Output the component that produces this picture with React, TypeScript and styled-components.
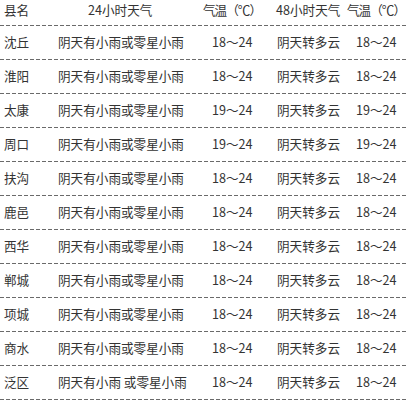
import styled, { createGlobalStyle } from "styled-components";

interface Row {
  name: string;
  day1: string;
  temp1: string;
  day2: string;
  temp2: string;
}

const rows: Row[] = [
  { name: "沈丘", day1: "阴天有小雨或零星小雨", temp1: "18～24", day2: "阴天转多云", temp2: "18～24" },
  { name: "淮阳", day1: "阴天有小雨或零星小雨", temp1: "18～24", day2: "阴天转多云", temp2: "18～24" },
  { name: "太康", day1: "阴天有小雨或零星小雨", temp1: "19～24", day2: "阴天转多云", temp2: "19～24" },
  { name: "周口", day1: "阴天有小雨或零星小雨", temp1: "19～24", day2: "阴天转多云", temp2: "19～24" },
  { name: "扶沟", day1: "阴天有小雨或零星小雨", temp1: "18～24", day2: "阴天转多云", temp2: "18～24" },
  { name: "鹿邑", day1: "阴天有小雨或零星小雨", temp1: "18～24", day2: "阴天转多云", temp2: "18～24" },
  { name: "西华", day1: "阴天有小雨或零星小雨", temp1: "18～24", day2: "阴天转多云", temp2: "18～24" },
  { name: "郸城", day1: "阴天有小雨或零星小雨", temp1: "18～24", day2: "阴天转多云", temp2: "18～24" },
  { name: "项城", day1: "阴天有小雨或零星小雨", temp1: "18～24", day2: "阴天转多云", temp2: "18～24" },
  { name: "商水", day1: "阴天有小雨或零星小雨", temp1: "18～24", day2: "阴天转多云", temp2: "18～24" },
  { name: "泛区", day1: "阴天有小雨 或零星小雨", temp1: "18～24", day2: "阴天转多云", temp2: "18～24" },
];

const App = () => {
  return (
    <>
      <GlobalStyle />
      <Table>
        <Line $header>
          <Cell>县名</Cell>
          <Cell $pad={30}>24小时天气</Cell>
          <Cell $pad={1} $tight>气温（℃）</Cell>
          <Cell>48小时天气</Cell>
          <Cell $tight>气温（℃）</Cell>
        </Line>
        {rows.map((r, idx) => (
          <Line key={idx}>
            <Cell>{r.name}</Cell>
            <Cell>{r.day1}</Cell>
            <Cell $pad={10}>{r.temp1}</Cell>
            <Cell $pad={1}>{r.day2}</Cell>
            <Cell $pad={9}>{r.temp2}</Cell>
          </Line>
        ))}
      </Table>
    </>
  );
};

const GlobalStyle = createGlobalStyle`
  body {
    margin: 0;
    background: #fff;
    font-family: "Noto Sans CJK SC", "Noto Sans", sans-serif;
  }
`;

const Table = styled.div`
  width: 406px;
  overflow: hidden;
`;

const Line = styled.div<{ $header?: boolean }>`
  display: grid;
  grid-template-columns: 54px 144px 74px 71px 1fr;
  align-items: center;
  height: ${(p) => (p.$header ? 20 : 33)}px;
  padding: 0 0 ${(p) => (p.$header ? 6 : 1)}px 4px;
  background-image: repeating-linear-gradient(
    to right,
    #6a6a6a 0 4px,
    transparent 4px 6px
  );
  background-size: 100% 1px;
  background-position: 0 100%;
  background-repeat: no-repeat;
  color: #333;
  font-size: 12.6px;
  line-height: 1;
  white-space: nowrap;
`;

const Cell = styled.div<{ $pad?: number; $tight?: boolean }>`
  padding-left: ${(p) => p.$pad ?? 0}px;
  letter-spacing: ${(p) => (p.$tight ? "-1px" : "normal")};
`;

export default App;
